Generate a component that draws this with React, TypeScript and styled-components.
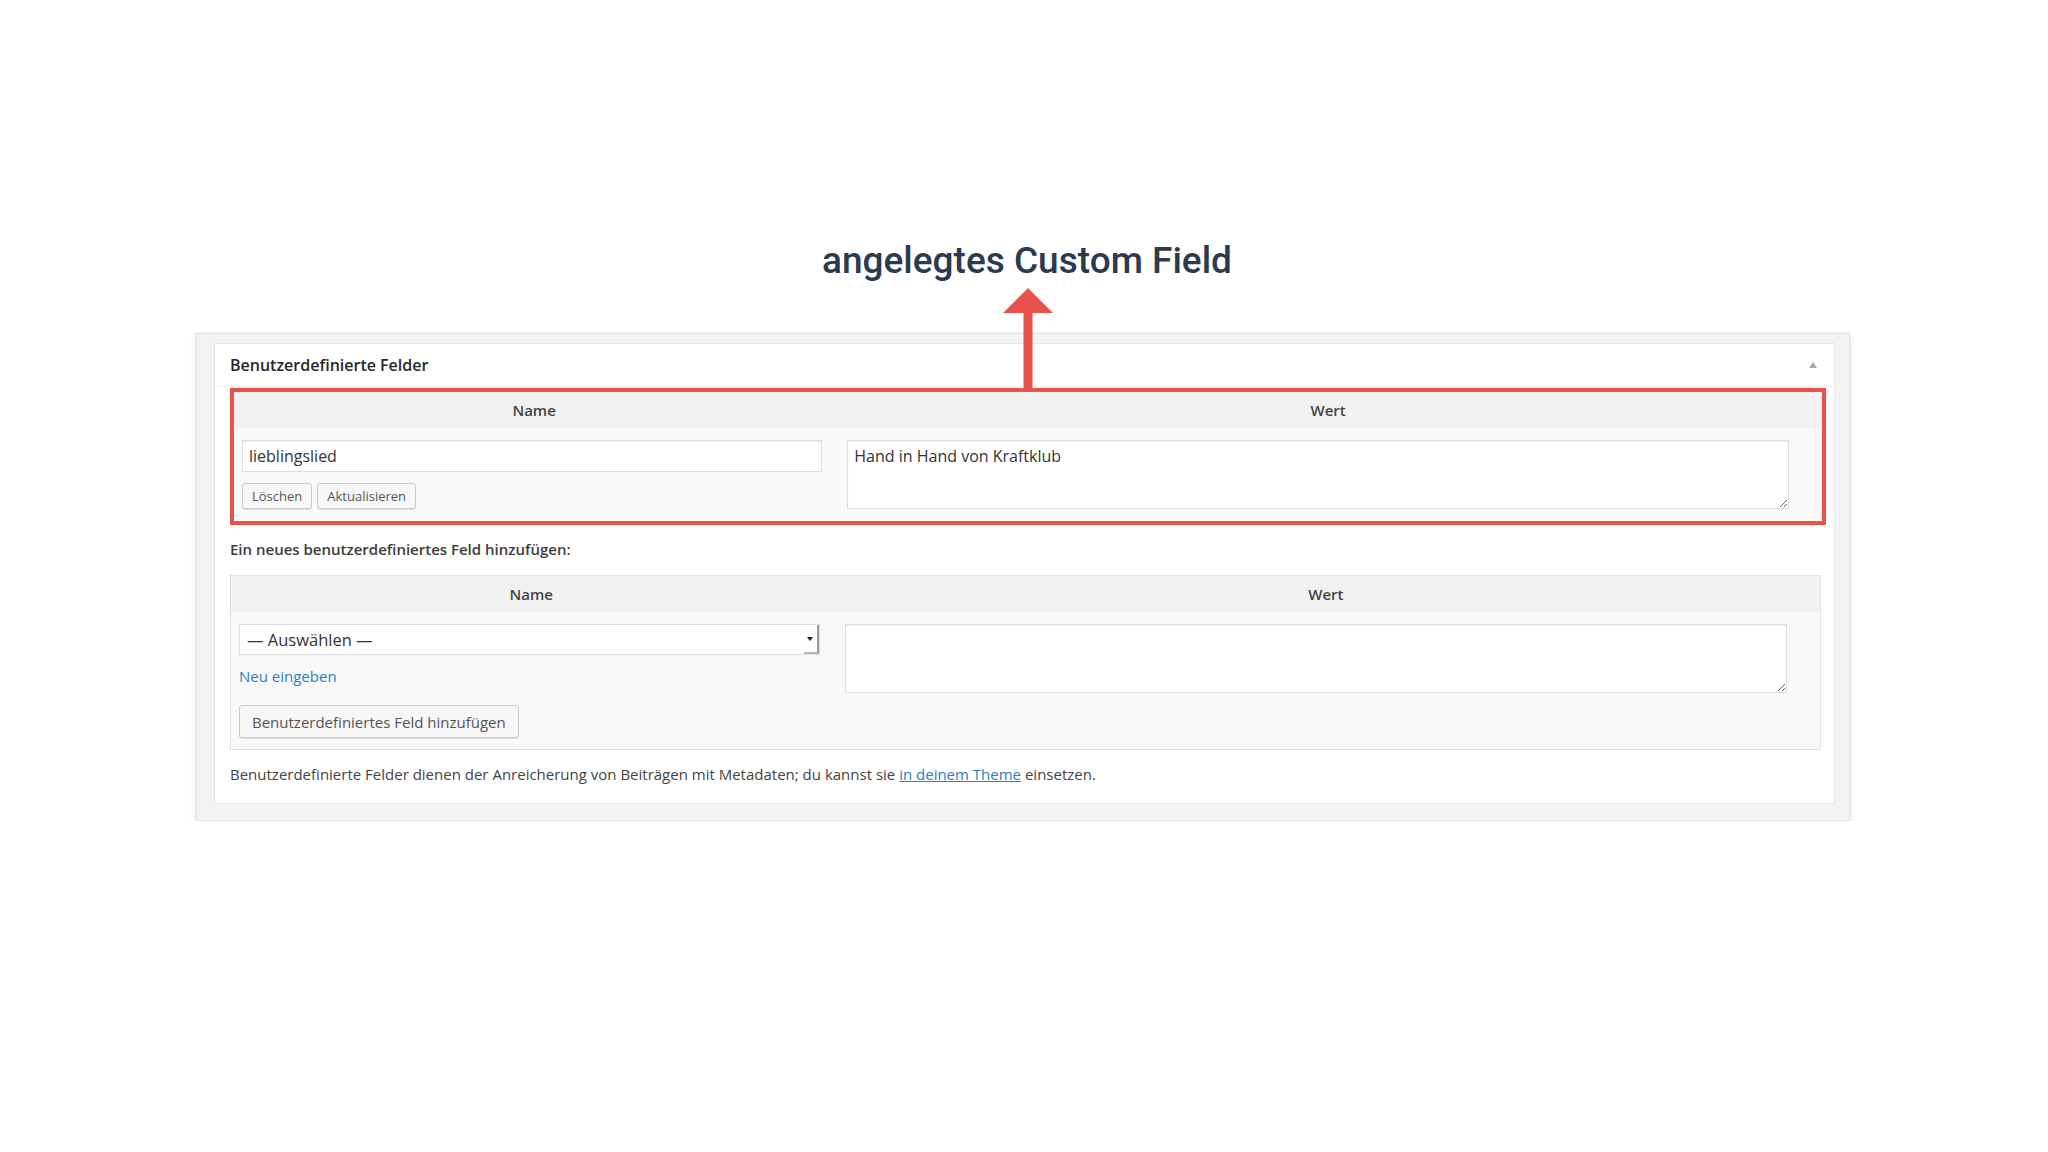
import React from 'react'
import styled, { createGlobalStyle } from 'styled-components'

const GlobalStyle = createGlobalStyle`
  body {
    margin: 0;
    background: #ffffff;
  }
`

const Page = styled.div`
  padding-top: 241px;
  font-family: 'Open Sans', 'Liberation Sans', sans-serif;
`

const Stage = styled.div`
  position: relative;
  width: 1654px;
  margin-left: 196px;
`

const Heading = styled.h1`
  margin: 0 0 52px;
  padding-left: 8px;
  text-align: center;
  font-family: Roboto, 'Liberation Sans', sans-serif;
  font-weight: 500;
  font-size: 37px;
  line-height: 40px;
  color: #2b3a4f;
`

const Arrow = styled.svg`
  position: absolute;
  left: 807px;
  top: 47px;
  z-index: 2;
`

const Frame = styled.div`
  background: #f3f3f3;
  border: 1px solid #e0e0e0;
  box-shadow: 0 2px 6px rgba(0, 0, 0, 0.14);
  padding: 9px 14px 16px 17px;
`

const Box = styled.div`
  background: #fff;
  border: 1px solid #e6e6e6;
`

const BoxHeader = styled.div`
  height: 42px;
  border-bottom: 1px solid #eeeeee;
  display: flex;
  align-items: center;
  justify-content: space-between;
  padding: 0 17px 0 15px;
`

const BoxTitle = styled.h2`
  margin: 0;
  font-size: 16px;
  font-weight: 600;
  color: #23282d;
`

const Toggle = styled.span`
  width: 0;
  height: 0;
  border-left: 4px solid transparent;
  border-right: 4px solid transparent;
  border-bottom: 6px solid #a8a8a8;
`

const Inside = styled.div`
  padding: 1px 13px 19px 15px;
`

const Highlight = styled.div`
  border: 4px solid #e9524b;
  margin-right: -5px;
`

const Table = styled.div<{ $bordered?: boolean }>`
  display: grid;
  grid-template-columns: 37.8% 1fr;
  background: #f9f9f9;
  border: ${(p) => (p.$bordered ? '1px solid #e1e1e1' : 'none')};
`

const Th = styled.div`
  height: 36px;
  display: flex;
  align-items: center;
  justify-content: center;
  background: #f1f1f1;
  font-size: 15px;
  font-weight: 600;
  color: #444;
`

const NameCell = styled.div<{ $last?: boolean }>`
  padding: 12px 12px ${(p) => (p.$last ? '11px' : '12px')} 8px;
  display: flex;
  flex-direction: column;
  align-items: flex-start;
`

const ValueCell = styled.div`
  padding: 12px 33px 12px 13px;
`

const TextInput = styled.input`
  box-sizing: border-box;
  width: 100%;
  height: 32px;
  margin: 0;
  padding: 0 6px;
  border: 1px solid #dddddd;
  box-shadow: inset 0 1px 2px rgba(0, 0, 0, 0.06);
  background: #fff;
  font-family: 'Open Sans', 'Liberation Sans', sans-serif;
  font-size: 16px;
  color: #333;
  outline: none;
`

const TextArea = styled.textarea`
  box-sizing: border-box;
  display: block;
  width: 100%;
  height: 69px;
  margin: 0;
  padding: 4px 6px;
  border: 1px solid #dddddd;
  box-shadow: inset 0 1px 2px rgba(0, 0, 0, 0.06);
  background: #fff;
  font-family: 'Open Sans', 'Liberation Sans', sans-serif;
  font-size: 16px;
  line-height: 22px;
  color: #333;
  outline: none;
`

const ButtonRow = styled.div`
  display: flex;
  gap: 5px;
  margin-top: 11px;
`

const Button = styled.button<{ $large?: boolean }>`
  box-sizing: border-box;
  height: ${(p) => (p.$large ? '33px' : '26px')};
  padding: ${(p) => (p.$large ? '0 12px' : '0 9px')};
  border: 1px solid #cccccc;
  border-radius: 3px;
  background: #f7f7f7;
  box-shadow: 0 1px 0 #dedede;
  font-family: 'Open Sans', 'Liberation Sans', sans-serif;
  font-size: ${(p) => (p.$large ? '15px' : '13px')};
  color: #555;
  cursor: pointer;
`

const Select = styled.div`
  box-sizing: border-box;
  width: 100%;
  height: 31px;
  display: flex;
  align-items: stretch;
  border: 1px solid #dddddd;
  background: #fff;
`

const SelectValue = styled.span`
  flex: 1;
  display: flex;
  align-items: center;
  padding-left: 7px;
  font-size: 16.5px;
  color: #333;
`

const SelectArrow = styled.span`
  width: 13px;
  display: flex;
  align-items: center;
  justify-content: center;
  border-right: 2px solid #9a9a9a;
  border-bottom: 2px solid #b5b5b5;
  &::after {
    content: '';
    border-left: 3px solid transparent;
    border-right: 3px solid transparent;
    border-top: 4px solid #222;
  }
`

const Link = styled.a`
  margin-top: 11px;
  font-size: 15px;
  line-height: 20px;
  color: #2581c4;
  text-decoration: none;
`

const AddButtonWrap = styled.div`
  margin-top: 19px;
`

const SubHeading = styled.p`
  margin: 14px 0 16px;
  font-size: 15px;
  line-height: 20px;
  font-weight: 600;
  color: #3c3c3c;
`

const Note = styled.p`
  margin: 14px 0 0;
  font-size: 15px;
  line-height: 20px;
  color: #444;
  a {
    color: #2581c4;
    text-decoration: underline;
  }
`

export default function App() {
  return (
    <Page>
      <GlobalStyle />
      <Stage>
        <Heading>angelegtes Custom Field</Heading>
        <Arrow width="50" height="104" viewBox="0 0 50 104">
          <polygon points="25,0 50,25 0,25" fill="#e9524b" />
          <rect x="20.5" y="24" width="9" height="80" fill="#e9524b" />
        </Arrow>
        <Frame>
          <Box>
            <BoxHeader>
              <BoxTitle>Benutzerdefinierte Felder</BoxTitle>
              <Toggle />
            </BoxHeader>
            <Inside>
              <Highlight>
                <Table>
                  <Th>Name</Th>
                  <Th>Wert</Th>
                  <NameCell>
                    <TextInput readOnly defaultValue="lieblingslied" />
                    <ButtonRow>
                      <Button>Löschen</Button>
                      <Button>Aktualisieren</Button>
                    </ButtonRow>
                  </NameCell>
                  <ValueCell>
                    <TextArea readOnly defaultValue="Hand in Hand von Kraftklub" />
                  </ValueCell>
                </Table>
              </Highlight>
              <SubHeading>Ein neues benutzerdefiniertes Feld hinzufügen:</SubHeading>
              <Table $bordered>
                <Th>Name</Th>
                <Th>Wert</Th>
                <NameCell $last>
                  <Select>
                    <SelectValue>— Auswählen —</SelectValue>
                    <SelectArrow />
                  </Select>
                  <Link href="#">Neu eingeben</Link>
                  <AddButtonWrap>
                    <Button $large>Benutzerdefiniertes Feld hinzufügen</Button>
                  </AddButtonWrap>
                </NameCell>
                <ValueCell>
                  <TextArea readOnly defaultValue="" />
                </ValueCell>
              </Table>
              <Note>
                Benutzerdefinierte Felder dienen der Anreicherung von Beiträgen mit Metadaten; du kannst sie{' '}
                <a href="#">in deinem Theme</a> einsetzen.
              </Note>
            </Inside>
          </Box>
        </Frame>
      </Stage>
    </Page>
  )
}
